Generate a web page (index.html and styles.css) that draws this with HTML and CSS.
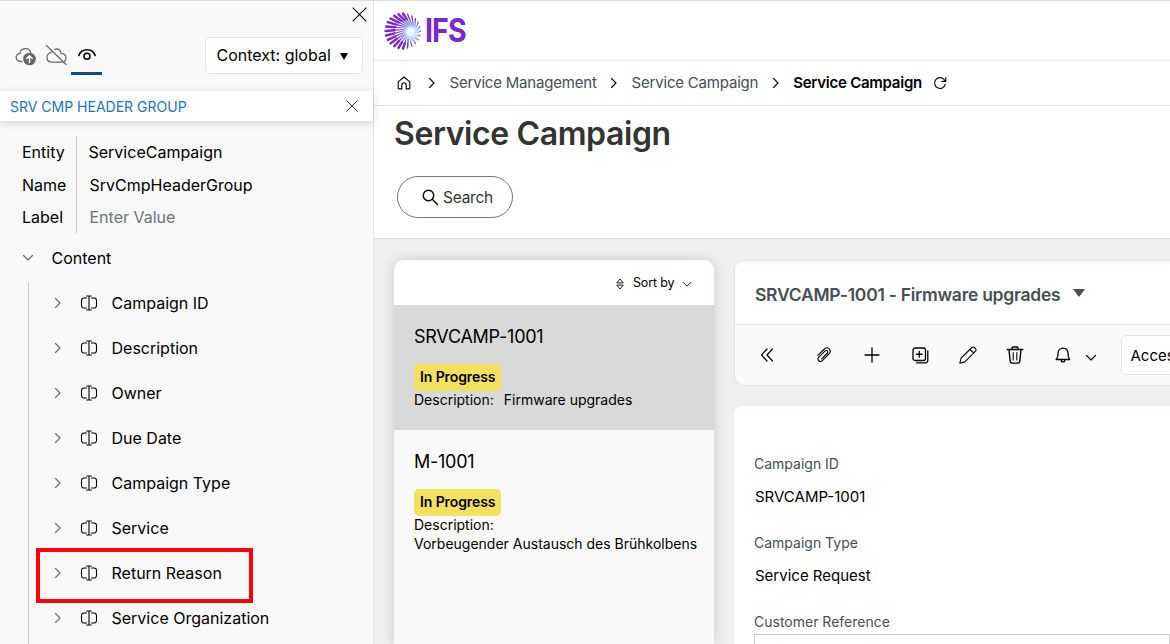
FILE: index.html
```html
<!DOCTYPE html>
<html lang="en">
<head>
<meta charset="utf-8">
<title>Service Campaign</title>
<link rel="stylesheet" href="styles.css">
</head>
<body>
<svg width="0" height="0" class="defs">
  <defs>
    <symbol id="right" viewBox="0 0 8 12"><path d="M1.500 1.500 6 6 1.500 10.500"/></symbol>
    <symbol id="down" viewBox="0 0 12 8"><path d="M1.500 1.500 6 6l4.500-4.500"/></symbol>
    <symbol id="cross" viewBox="0 0 16 16"><path d="M1 1l14 14M15 1 1 15"/></symbol>
    <symbol id="field" viewBox="0 0 18 16"><path d="M6.500 3H4a2.500 2.500 0 0 0-2.500 2.500v5A2.500 2.500 0 0 0 4 13h2.500M11.500 3H14a2.500 2.500 0 0 1 2.500 2.500v5A2.500 2.500 0 0 1 14 13h-2.500M9 1v14M6.700 1h4.600M6.700 15h4.600"/></symbol>
  </defs>
</svg>
<div class="app">
  <aside class="panel">
    <div class="panel-top">
      <button class="panel-close"><svg class="icon" width="15" height="15"><use href="#cross"/></svg></button>
      <div class="modes">
        <span class="mode"><svg class="icon" width="22" height="22" viewBox="0 0 22 22"><g stroke="#6a6a6a" stroke-width="1.300"><path d="M7 16.500H5.500a4 4 0 0 1-.6-8A5.600 5.600 0 0 1 15.800 7.500"/></g><circle cx="14.500" cy="14" r="6.300" fill="#666" stroke="none"/><path d="M14.500 17.500v-6.500M11.800 13.500l2.700-2.700 2.700 2.700" stroke="#fff" stroke-width="1.500"/></svg></span>
        <span class="mode"><svg class="icon" width="22" height="22" viewBox="0 0 22 22"><g stroke="#6a6a6a" stroke-width="1.300"><path d="M.5.500 20 19.500M5.500 7C2.500 8 .7 10.500 1 13.200 1.400 16 3 17.200 5.500 17.200h11.500M8.500 4.500C12 3 14.500 5 15.300 8.700c3-.2 4.700 1.800 4.700 4.200 0 1.500-.6 2.600-1.500 3.300"/></g></svg></span>
        <span class="mode mode-on"><svg class="icon" width="20" height="16" viewBox="0 0 20 16"><g stroke-width="1.600"><path d="M1.800 8.500C4.500.9 15.500.9 18.200 8.500"/><circle cx="10" cy="9.300" r="3"/></g></svg></span>
      </div>
      <button class="context"><span>Context: global</span><i class="caret"></i></button>
    </div>
    <div class="group-bar"><span>SRV CMP HEADER GROUP</span><svg class="icon" width="12" height="12"><use href="#cross"/></svg></div>
    <div class="panel-body">
      <div class="props">
        <div class="prop-names"><span>Entity</span><span>Name</span><span>Label</span></div>
        <div class="prop-values"><span>ServiceCampaign</span><span class="nudge">SrvCmpHeaderGroup</span><span class="nudge placeholder">Enter Value</span></div>
      </div>
      <div class="content-row"><svg class="icon dim" width="12" height="8"><use href="#down"/></svg><span>Content</span></div>
      <div class="tree">
        <div class="node"><svg class="icon dim" width="8" height="12"><use href="#right"/></svg><svg class="icon" width="18" height="16"><use href="#field"/></svg><span>Campaign ID</span></div>
        <div class="node"><svg class="icon dim" width="8" height="12"><use href="#right"/></svg><svg class="icon" width="18" height="16"><use href="#field"/></svg><span>Description</span></div>
        <div class="node"><svg class="icon dim" width="8" height="12"><use href="#right"/></svg><svg class="icon" width="18" height="16"><use href="#field"/></svg><span>Owner</span></div>
        <div class="node"><svg class="icon dim" width="8" height="12"><use href="#right"/></svg><svg class="icon" width="18" height="16"><use href="#field"/></svg><span>Due Date</span></div>
        <div class="node"><svg class="icon dim" width="8" height="12"><use href="#right"/></svg><svg class="icon" width="18" height="16"><use href="#field"/></svg><span>Campaign Type</span></div>
        <div class="node"><svg class="icon dim" width="8" height="12"><use href="#right"/></svg><svg class="icon" width="18" height="16"><use href="#field"/></svg><span>Service</span></div>
        <div class="node marked"><svg class="icon dim" width="8" height="12"><use href="#right"/></svg><svg class="icon" width="18" height="16"><use href="#field"/></svg><span>Return Reason</span></div>
        <div class="node"><svg class="icon dim" width="8" height="12"><use href="#right"/></svg><svg class="icon" width="18" height="16"><use href="#field"/></svg><span>Service Organization</span></div>
      </div>
    </div>
  </aside>
  <main class="main">
    <header class="brand">
      <svg class="burst" width="38" height="38" viewBox="0 0 38 38">
        <defs><radialGradient id="ray" gradientUnits="userSpaceOnUse" cx="27" cy="20" r="24"><stop offset="0" stop-color="#f2fdff"/><stop offset=".2" stop-color="#c4ecfc"/><stop offset=".36" stop-color="#8f8fe8"/><stop offset=".55" stop-color="#7c33d2"/><stop offset="1" stop-color="#7a22d0"/></radialGradient></defs>
        <g stroke="url(#ray)" stroke-linecap="round" fill="none">
          <path stroke-width="1.200" d="M19 36.500 23.700 22.800M14.500 35.900 23 22M10.200 34.200 22.600 21M6.600 31.400 22.500 20M3.800 27.800 22.600 19M2.100 23.500 23 18M1.500 19 23.700 17.200M2.100 14.500 24.500 16.500M3.800 10.200 25.500 16.100M6.600 6.600 26.500 16M10.200 3.800 27.500 16.100M14.500 2.100 28.500 16.500M19 1.500 29.300 17.200M23.500 35.900 24.500 23.500"/>
          <path stroke-width="2.400" d="M19 36.500 20.900 31M14.500 35.900 17.900 30.300M10.200 34.200 15.200 28.900M6.600 31.400 13 26.800M3.800 27.800 11.300 24.300M2.100 23.500 10.500 21.300M1.500 19 10.400 18.300M2.100 14.500 11.100 15.300M3.800 10.200 12.500 12.600M6.600 6.600 14.600 10.400M10.200 3.800 17.100 8.700M14.500 2.100 20.100 7.900M19 1.500 22.600 7"/>
          <path stroke-width="1.300" d="M36.500 19 29.300 22.800M35.900 23.500 28.500 23.500M34.200 27.800 27.500 23.900M31.400 31.400 26.500 24M27.800 34.200 25.500 23.900M23.500 35.900 24.200 27M23.500 2.100 30 18M27.800 3.800 30.400 19M31.400 6.600 30.500 20M34.200 10.200 30.400 21M35.900 14.500 30 22"/>
        </g>
        <circle cx="26.500" cy="20" r="3.600" fill="#f4feff"/>
      </svg>
      <span class="wordmark">IFS</span>
    </header>
    <nav class="crumbs">
      <svg class="icon home" width="14" height="14" viewBox="0 0 14 14"><path d="M1.200 5.800 7 1l5.800 4.800v6.100a1 1 0 0 1-1 1H9.200V9a2.200 2.200 0 0 0-4.400 0v3.900H2.200a1 1 0 0 1-1-1z"/></svg>
      <svg class="icon sep1" width="8" height="12"><use href="#right"/></svg>
      <span class="crumb1">Service Management</span>
      <svg class="icon sep2" width="8" height="12"><use href="#right"/></svg>
      <span class="crumb2">Service Campaign</span>
      <svg class="icon sep3" width="8" height="12"><use href="#right"/></svg>
      <b>Service Campaign</b>
      <svg class="icon reload" width="14" height="14" viewBox="0 0 14 14"><path d="M12.300 8.200A5.400 5.400 0 1 1 11.500 4L12.600 5.200M12.800 1.500v3.900H9"/></svg>
    </nav>
    <section class="heading">
      <h1>Service Campaign</h1>
      <button class="search"><svg class="icon" width="17" height="17" viewBox="0 0 17 17"><g stroke-width="1.400"><circle cx="6.500" cy="6.500" r="5.200"/><path d="M10.300 10.300 15.500 15.500"/></g></svg><span>Search</span></button>
    </section>
    <section class="workspace">
      <div class="list">
        <div class="sort">
          <svg class="icon updown" width="8" height="12" viewBox="0 0 8 12"><path d="M1 4.600 4 1l3 3.600zM1 7.400 4 11l3-3.600z" stroke-width=".9"/></svg>
          <span>Sort by</span>
          <svg class="icon chev" width="10" height="7" viewBox="0 0 12 8"><path d="M1.500 1.500 6 6l4.500-4.500"/></svg>
        </div>
        <article class="item selected">
          <h3>SRVCAMP-1001</h3>
          <span class="badge">In Progress</span>
          <p><span>Description:</span><span class="value">Firmware upgrades</span></p>
        </article>
        <article class="item">
          <h3>M-1001</h3>
          <span class="badge">In Progress</span>
          <p>Description:</p>
          <p class="long">Vorbeugender Austausch des Brühkolbens</p>
        </article>
      </div>
      <div class="detail">
        <div class="record">
          <div class="record-title"><span>SRVCAMP-1001 - Firmware upgrades</span><i class="caret"></i></div>
          <div class="tools">
            <svg class="icon t1" width="14" height="14" viewBox="0 0 14 14"><path d="M7 1 1.500 7 7 13M12.500 1 7 7l5.500 6" stroke-width="1.200"/></svg>
            <svg class="icon t2" width="16" height="16" viewBox="0 0 16 16"><path d="M1.800 8.300 8.400 2a3.300 3.300 0 0 1 4.800 4.600L6.300 13.700a2.500 2.500 0 0 1-3.600-3.500l6.500-6.300a1.500 1.500 0 0 1 2.200 2.100L5.600 11.800" stroke-width="1.100"/></svg>
            <svg class="icon t3" width="14" height="14" viewBox="0 0 14 14"><path d="M7 0v14M0 7h14" stroke-width="1.300"/></svg>
            <svg class="icon t4" width="17" height="17" viewBox="0 0 17 17"><g stroke-width="1.300"><rect x="1" y="1" width="12.500" height="12.500" rx="2"/><path d="M7.250 4.500v5.500M4.500 7.250H10M15.800 4v9.300a2.500 2.500 0 0 1-2.500 2.500H4.500"/></g></svg>
            <svg class="icon t5" width="18" height="18" viewBox="0 0 18 18"><path d="M.8 17.200l1.300-5L12.800 1.500a1.800 1.800 0 0 1 2.600 0l1.100 1.100a1.800 1.800 0 0 1 0 2.600L5.800 15.900zM11 3.300 14.700 7" /></svg>
            <svg class="icon t6" width="16" height="18" viewBox="0 0 16 18"><g stroke-width="1.400"><path d="M.2 3.500h15.600M5 3.300V2a1 1 0 0 1 1-1h4a1 1 0 0 1 1 1v1.300M2 3.500l1.200 11.900a2 2 0 0 0 2 1.700h5.600a2 2 0 0 0 2-1.700L14 3.500"/></g><path d="M6.200 6.500v7.500M9.800 6.500v7.500"/></svg>
            <svg class="icon t7" width="16" height="16" viewBox="0 0 16 16"><g stroke-width="1.300"><path d="M1.200 12.500c1.500-1.500 1.800-3 1.800-5.900C3 3.400 5 1.200 8 1.200s5 2.200 5 5.400c0 2.900.3 4.400 1.800 5.900zM6 12.700c.2 3 3.800 3 4 0"/></g></svg>
            <svg class="icon t8" width="12" height="8"><use href="#down"/></svg>
            <button class="access">Access</button>
          </div>
        </div>
        <div class="form">
          <label>Campaign ID</label><div class="field-value">SRVCAMP-1001</div>
          <label>Campaign Type</label><div class="field-value">Service Request</div>
          <label>Customer Reference</label><div class="input"></div>
        </div>
      </div>
    </section>
  </main>
</div>
</body>
</html>
```
FILE: styles.css
```css
* { box-sizing: border-box; }
body { margin: 0; font-family: Inter, "Liberation Sans", sans-serif; font-size: 16px; color: #000; overflow: hidden; }
button { font: inherit; color: inherit; background: #fff; padding: 0; }
h1, h3, p { margin: 0; font-weight: 400; }
span, b, label { white-space: nowrap; }
.defs { position: absolute; }
.icon { display: block; flex: none; fill: none; stroke: #000; stroke-width: 1.1; stroke-linecap: round; stroke-linejoin: round; overflow: visible; }
.dim { stroke: #6a6a6a; }
.app { display: flex; width: 1170px; height: 644px; border-top: 1px solid #ddd; overflow: hidden; }

.panel { flex: none; width: 374px; background: #f8f8f8; border-right: 1px solid #e3e3e3; display: flex; flex-direction: column; }
.panel-top { flex: none; height: 90px; display: grid; grid-template-columns: 1fr auto; grid-template-rows: 36px 36px; padding: 0 10px 0 15px; }
.panel-close { grid-column: 1 / 3; justify-self: end; border: 0; background: none; height: 15px; margin: 6px -4px 0 0; }
.modes { display: flex; gap: 9px; height: 38px; }
.mode { padding-top: 8px; }
.mode-on { padding: 10px 6px 0; margin-left: -6px; width: 31px; border-bottom: 3px solid #08508c; }
.context { width: 158px; height: 37px; border: 1px solid #e3e3e3; border-radius: 5px; display: flex; align-items: center; padding: 0 0 1px 10.500px; gap: 9px; }
.caret { display: block; border: 4.500px solid transparent; border-top: 7px solid #000; border-bottom: 0; }
.context .caret { margin-top: 2px; }
.group-bar { position: relative; flex: none; height: 30px; background: #fff; display: flex; align-items: center; justify-content: space-between; padding: 0 15px 0 10px; font-size: 14px; color: #1a75bc; box-shadow: 0 2px 10px rgba(0,0,0,.14); }
.panel-body { padding-top: 15px; }
.props { display: flex; margin-left: 22px; height: 97px; }
.prop-names, .prop-values { display: flex; flex-direction: column; line-height: 32.500px; }
.prop-names { width: 55px; border-right: 1px solid #c8c8c8; }
.prop-values { padding-left: 11.500px; }
.nudge { padding-left: 1px; }
.placeholder { color: #6d7478; }
.content-row { display: flex; align-items: center; height: 50px; padding-left: 22px; gap: 17.500px; }
.tree { margin-left: 28px; border-left: 1px solid #c8c8c8; height: 364px; }
.node { display: flex; align-items: center; height: 45px; padding: 0 0 6px 25px; }
.node .icon + .icon { margin: 0 13.500px 0 18px; }
.marked { width: 217px; height: 55px; margin: -5.500px 0 -4.500px 7px; padding: 0 0 5px 14px; border: 4px solid #fb0207; }

.main { flex: 1; min-width: 0; display: flex; flex-direction: column; }
.brand { height: 60px; flex: none; border-bottom: 1px solid #e5e5e5; display: flex; align-items: center; padding-left: 10px; gap: 3px; }
.wordmark { font-size: 32px; font-weight: 700; line-height: 32px; color: #7b26d1; letter-spacing: -1px; transform: scaleX(.89); transform-origin: left; }
.crumbs { height: 45px; flex: none; border-bottom: 1px solid #e5e5e5; display: flex; align-items: center; padding: 0 0 1px 23px; font-size: 15px; letter-spacing: -.2px; color: #454f54; }
.crumbs b { font-weight: 600; color: #000; letter-spacing: -.25px; }
.sep1 { margin: 0 13.500px 0 17px; }
.sep2, .sep3 { margin: 0 13.500px; }
.reload { margin-left: 11px; }
.heading { height: 133px; flex: none; border-bottom: 1px solid #dcdcdc; padding: 8px 0 0 20px; }
.heading h1 { font-size: 32px; line-height: 40px; font-weight: 600; color: #333; letter-spacing: -.4px; }
.search { width: 116px; height: 42px; margin: 22px 0 0 3px; border: 1px solid #777; border-radius: 21px; display: flex; align-items: center; padding-left: 24px; gap: 4px; font-size: 15.500px; letter-spacing: -.25px; color: #333; }
.workspace { flex: 1; background: #f1eff2; display: flex; padding: 21px 0 0 20px; gap: 20px; }
.list { width: 320px; flex: none; background: #f9f9f9; border-radius: 10px 10px 0 0; box-shadow: 0 0 14px rgba(0,0,0,.16); overflow: hidden; }
.sort { height: 45px; background: #fff; display: flex; align-items: center; padding-left: 222px; font-size: 12.500px; letter-spacing: -.15px; }
.sort span { margin: -1px 8px 0 9px; }
.updown { margin-top: 3px; }
.chev { margin-top: 4px; }
.item { height: 125px; padding: 20px 20px 0; font-size: 14px; line-height: 19px; }
.selected { background: #d9d9d9; }
.item h3 { font-size: 18px; line-height: 24px; letter-spacing: -.25px; }
.badge { display: block; width: 87px; height: 27px; margin: 15px 0 -1px; padding-left: 6px; background: #f3e05f; border-radius: 5px; line-height: 26px; font-weight: 600; letter-spacing: -.1px; }
.value { margin-left: 10px; }
.long { white-space: nowrap; }
.detail { flex: 1; min-width: 0; }
.record { height: 126px; border: 1px solid #e3e1e4; border-right: 0; border-radius: 10px 0 0 10px; background: #f9f9f9; overflow: hidden; }
.record-title { height: 64px; background: #fff; border-bottom: 1px solid #e3e3e3; display: flex; align-items: center; padding: 4px 0 0 20px; font-size: 17.500px; letter-spacing: -.26px; font-weight: 600; color: #454f54; gap: 13px; }
.record-title .caret { border: 6px solid transparent; border-top: 8px solid #454f54; border-bottom: 0; margin-top: -4px; }
.tools { height: 60px; display: flex; align-items: center; padding-left: 25px; }
.t2 { margin-left: 42px; } .t3 { margin-left: 33px; } .t4 { margin-left: 33px; } .t5 { margin-left: 30px; }
.t6 { margin-left: 30px; } .t7 { margin-left: 31.500px; } .t8 { margin: 5px 0 0 14px; }
.access { flex: none; width: 110px; height: 40px; margin-left: 24px; border: 1px solid #e3e3e3; border-radius: 5px; text-align: left; padding-left: 9px; font-size: 15px; }
.form { height: 240px; margin-top: 20px; background: #fff; border-radius: 8px 0 0 0; padding: 47px 0 0 20px; }
.form label { display: block; height: 22px; line-height: 22px; font-size: 14px; color: #454f54; }
.field-value { height: 57px; padding: 11px 0 0 1px; line-height: 22px; font-size: 15px; }
.input { height: 30px; margin-top: 1px; border: 1px solid #ccc; width: 416px; }
```
